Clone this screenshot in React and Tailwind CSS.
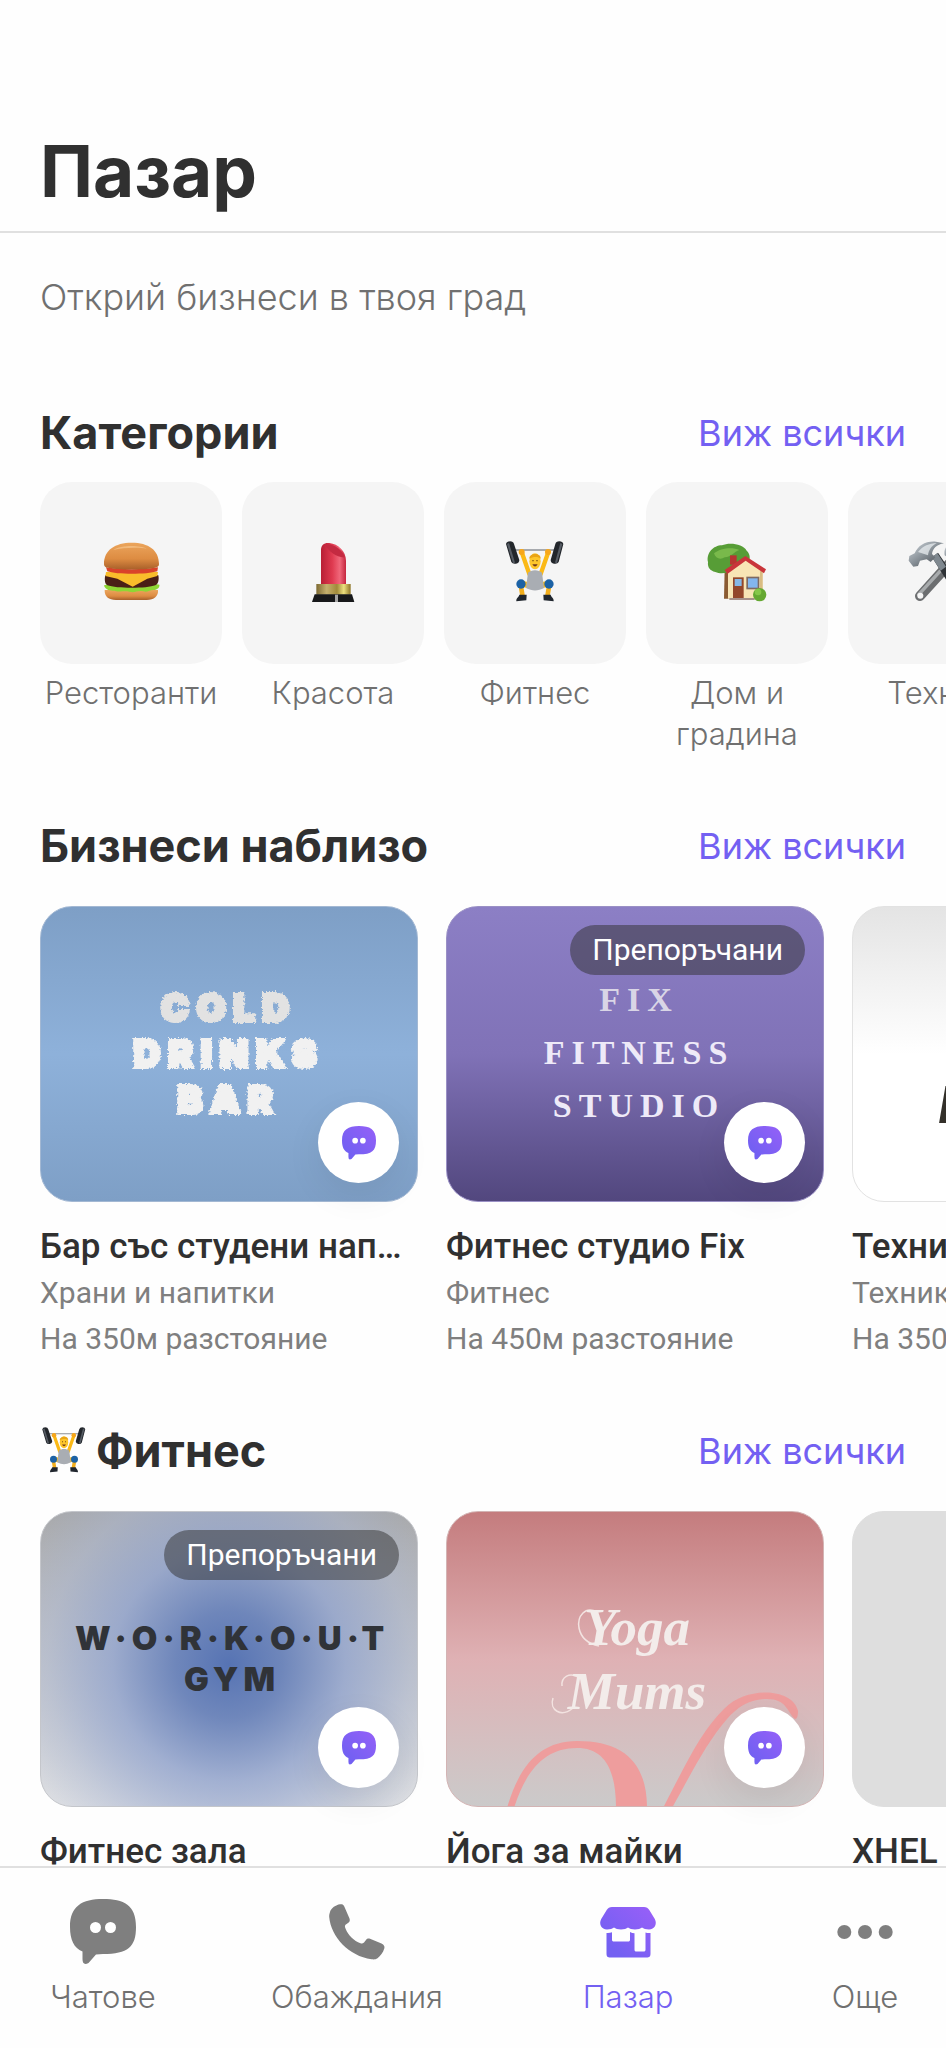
import React from "react";

function Burger({ className }) {
  return (
    <svg viewBox="297 213 192 192" className={className} aria-hidden="true">
      <defs>
        <linearGradient id="bun" x1="0" y1="0" x2="0" y2="1">
          <stop offset="0" stopColor="#eba55c" />
          <stop offset="0.6" stopColor="#dd8c42" />
          <stop offset="1" stopColor="#a9602a" />
        </linearGradient>
      </defs>
      <path d="M314 360 H474 C476 378 462 390 440 390 H348 C326 390 313 380 314 360Z" fill="url(#bun)" />
      <path d="M312 346 C320 340 468 340 478 344 C480 352 472 358 464 360 C450 358 444 368 430 364 C414 360 404 370 388 365 C370 362 360 368 344 362 C330 364 314 358 312 346Z" fill="#8fd634" />
      <path d="M316 316 C340 308 450 308 475 316 C478 330 474 344 466 346 C440 356 350 356 322 346 C314 342 313 328 316 316Z" fill="#4a1f16" />
      <path d="M318 306 H474 L472 318 L442 326 L398 350 L352 326 L316 318Z" fill="#f9bd2b" />
      <path d="M318 292 C360 300 430 300 474 292 L472 304 C440 314 350 314 322 304Z" fill="#d9432a" />
      <path d="M312 282 C312 240 345 218 395 218 C446 218 477 240 477 282 C477 290 470 293 462 294 C430 300 356 300 328 294 C319 293 312 291 312 282Z" fill="url(#bun)" />
      <path d="M340 240 C360 225 420 224 440 236 C420 232 370 232 340 240Z" fill="#f5c184" opacity="0.8" />
    </svg>
  );
}

function Lipstick({ className }) {
  return (
    <svg viewBox="903 213 192 192" className={className} aria-hidden="true">
      <defs>
        <linearGradient id="stick" x1="0" x2="1">
          <stop offset="0" stopColor="#b81f35" />
          <stop offset="0.45" stopColor="#df3a50" />
          <stop offset="0.75" stopColor="#f0677a" />
          <stop offset="1" stopColor="#c4253d" />
        </linearGradient>
        <linearGradient id="gold" x1="0" x2="1">
          <stop offset="0" stopColor="#7d6a33" />
          <stop offset="0.3" stopColor="#c5b06e" />
          <stop offset="0.6" stopColor="#a18a3a" />
          <stop offset="0.8" stopColor="#ece07e" />
          <stop offset="1" stopColor="#8d7426" />
        </linearGradient>
      </defs>
      <path d="M963 344 V240 C963 224 974 217 988 219 C1015 222 1038 244 1038 272 V344Z" fill="url(#stick)" />
      <path d="M974 223 C1000 220 1030 240 1034 262 C1012 264 984 244 974 223Z" fill="#c42a41" />
      <path d="M949 342 H1052 V374 H949Z" fill="url(#gold)" />
      <path d="M944 373 H1056 L1063 396 H936Z" fill="#17181a" />
      <path d="M1005 374 H1014 V396 H1005Z" fill="#a4a4a4" />
    </svg>
  );
}

function Lifter({ className }) {
  return (
    <svg viewBox="111 213 192 192" className={className} aria-hidden="true">
      <path d="M140 240 H275" stroke="#8d9096" strokeWidth="4" />
      <path d="M120 222 Q122 214 132 214 Q142 214 144 222 L160 270 Q160 279 150 281 Q140 283 136 276Z" fill="#22262b" />
      <path d="M123 222 L129 219 L147 278 L141 279Z" fill="#565c64" />
      <path d="M292 222 Q290 214 280 214 Q270 214 268 222 L254 270 Q254 279 264 281 Q274 283 278 276Z" fill="#22262b" />
      <path d="M289 222 L283 219 L267 278 L273 279Z" fill="#565c64" />
      <path d="M167 246 L190 312 M247 246 L224 312" stroke="#fbb916" strokeWidth="13" strokeLinecap="round" />
      <circle cx="167" cy="246" r="9" fill="#f7a71b" />
      <circle cx="246" cy="246" r="9" fill="#f7a71b" />
      <path d="M165 340 L188 346 M249 340 L226 346" stroke="#fbb916" strokeWidth="18" />
      <path d="M165 350 L170 380 M249 350 L244 380" stroke="#f2ae1c" strokeWidth="14" />
      <path d="M186 308 C196 298 218 298 228 308 L234 354 C216 364 198 364 180 354Z" fill="#a9adb3" />
      <ellipse cx="207" cy="274" rx="17" ry="24" fill="#fdc62b" />
      <path d="M190 266 C188 248 226 246 224 266 C216 258 200 260 190 266Z" fill="#e9a416" />
      <path d="M199 283 Q207 296 215 283Z" fill="#713a1b" />
      <circle cx="201" cy="272" r="2" fill="#50310f" />
      <circle cx="213" cy="272" r="2" fill="#50310f" />
      <circle cx="165" cy="342" r="14" fill="#1c62a5" />
      <circle cx="249" cy="342" r="14" fill="#1c62a5" />
      <path d="M160 374 H182 L181 391 L151 394 C150 384 158 382 160 374Z" fill="#20262e" />
      <path d="M254 374 H232 L233 391 L263 394 C264 384 256 382 254 374Z" fill="#20262e" />
    </svg>
  );
}

function House({ className }) {
  return (
    <svg viewBox="717 213 192 192" className={className} aria-hidden="true">
      <path d="M776 296 H790 V386 H774Z" fill="#8a5a31" />
      <path d="M726 276 C720 250 742 226 768 226 C790 216 832 222 842 242 C860 258 850 290 826 298 C800 304 770 316 748 306 C732 302 724 292 726 276Z" fill="#579d36" />
      <path d="M744 250 C762 234 800 230 820 240 C804 244 796 262 776 262 C764 270 748 266 744 250Z" fill="#79b94b" />
      <path d="M792 256 H812 V284 H792Z" fill="#b73532" />
      <path d="M786 304 L840 264 L890 300 V386 H786Z" fill="#f8e5b5" />
      <path d="M890 300 V386 H882 V304Z" fill="#d9bc83" />
      <path d="M776 300 L838 258 L900 298 L894 310 L839 272 L784 312Z" fill="#c9353a" />
      <path d="M801 322 H833 V386 H801Z" fill="#93472b" />
      <path d="M806 327 H827 V348 H806Z" fill="#86b8e6" />
      <path d="M841 320 H880 V358 H841Z" fill="#7e6a62" />
      <path d="M846 325 H875 V353 H846Z" fill="#83b6ee" />
      <path d="M790 384 H866 V390 H790Z" fill="#a6918a" />
      <circle cx="881" cy="374" r="20" fill="#65a832" />
      <circle cx="876" cy="366" r="10" fill="#85c748" />
    </svg>
  );
}

function Tools({ className }) {
  return (
    <svg viewBox="1323 213 192 192" className={className} aria-hidden="true">
      <defs>
        <linearGradient id="steel" x1="0" y1="0" x2="1" y2="1">
          <stop offset="0" stopColor="#d3dae0" />
          <stop offset="0.5" stopColor="#868e95" />
          <stop offset="1" stopColor="#3b4045" />
        </linearGradient>
      </defs>
      <path d="M1362 378 L1478 250" stroke="#6c6e70" strokeWidth="30" strokeLinecap="round" />
      <path d="M1358 374 L1440 284" stroke="#a8abad" strokeWidth="10" strokeLinecap="round" />
      <circle cx="1363" cy="377" r="9" fill="#f5f5f5" />
      <path d="M1436 256 C1432 234 1446 218 1470 216 L1462 240 L1482 252 L1500 236 C1504 262 1484 276 1462 272Z" fill="url(#steel)" />
      <path d="M1398 262 L1416 248 L1500 372 C1502 388 1486 396 1476 386Z" fill="#2f3337" />
      <path d="M1398 262 L1414 249 L1440 290 L1424 302Z" fill="#7f888f" />
      <path d="M1330 258 L1346 250 C1356 226 1380 212 1410 215 L1434 220 C1412 224 1400 236 1398 252 L1408 262 L1394 276 L1382 268 L1362 272 L1356 288 L1342 290 L1328 272Z" fill="url(#steel)" />
      <path d="M1356 246 C1370 228 1390 220 1412 219 C1396 228 1388 240 1386 256Z" fill="#eef2f5" opacity="0.7" />
    </svg>
  );
}

const bubble =
  "M33 0 C54 0 66 6 66 28 C66 48 58 55 33 55 L26 55.5 L18.500 64 Q12.500 67 12.500 60 L12.500 52.500 C4 49 0 41 0 28 C0 7 12 0 33 0Z";

function ChatIcon({ className, brand }) {
  return (
    <svg viewBox="0 0 66 66" className={className} aria-hidden="true">
      <defs>
        <linearGradient id="brand" x1="0" y1="1" x2="1" y2="0">
          <stop offset="0.2" stopColor="#7360f2" />
          <stop offset="1" stopColor="#9560f8" />
        </linearGradient>
      </defs>
      <path d={bubble} fill={brand ? "url(#brand)" : "#7f7f7f"} />
      <circle cx="25.500" cy="28.500" r="5.500" fill="#fff" />
      <circle cx="40.500" cy="28.500" r="5.500" fill="#fff" />
    </svg>
  );
}

function PhoneIcon({ className }) {
  return (
    <svg viewBox="-5 -5 66 66" className={className} aria-hidden="true">
      <path
        d="M1 8 C2 4 7 1 11 0.300 C13 0 14.500 0.500 15.300 2.500 L20.500 14.500 C21.300 16.500 20.500 18 19 19 L16.500 20.800 C15.500 22 16 23 16.500 24.500 C19 31 25 37 31.500 39.300 C33 39.800 34 39.500 35 38.500 L37 36 C38 34.500 39.500 34.200 41 34.700 L52.500 39.500 C55 40.500 56 42.500 55.300 44.500 C54 48.500 51.500 52 48.500 54.300 C46.500 55.600 45 55.600 42.500 55.300 C20 52 2 33 0.200 13 C0.100 11 0.500 9.500 1 8Z"
        fill="#7f7f7f"
      />
    </svg>
  );
}

function StoreIcon({ className }) {
  return (
    <svg viewBox="-5 -8 66 66" className={className} aria-hidden="true">
      <defs>
        <linearGradient id="store" x1="0" y1="1" x2="1" y2="0">
          <stop offset="0.200" stopColor="#7360f2" />
          <stop offset="1" stopColor="#9a5ff8" />
        </linearGradient>
      </defs>
      <path
        fillRule="evenodd"
        fill="url(#store)"
        d="M12 0 H44 C46.500 0 48 1 49.300 3 L54.800 12 C57.500 17 54.500 22.500 49 22.500 C46 22.500 43.500 21.800 42 20.600 C40.500 21.800 38 22.500 35 22.500 C32 22.500 29.500 21.800 28 20.600 C26.500 21.800 24 22.500 21 22.500 C18 22.500 15.500 21.800 14 20.600 C12.500 21.800 10 22.500 7 22.500 C1.500 22.500 -1.500 17 1.200 12 L6.700 3 C8 1 9.500 0 12 0Z M6.500 26 C8.500 26.200 10.500 26 12 25.300 V32.500 C12 34 12.500 34.500 14 34.500 H28 C29.500 34.500 30 34 30 32.500 V25 C31.500 25.800 33 26.200 34.500 26.200 V42.500 C34.500 44 35 44.500 36.500 44.500 H43.500 C45 44.500 45.500 44 45.500 42.500 V25.500 C47 26.100 48.800 26.200 50.500 26 V46.500 C50.500 49.500 49.500 50.500 46.500 50.500 H10.500 C7.500 50.500 6.500 49.500 6.500 46.500Z"
      />
    </svg>
  );
}

function MoreIcon({ className }) {
  return (
    <svg viewBox="0 0 66 66" className={className} aria-hidden="true">
      <circle cx="12.300" cy="33" r="7" fill="#7f7f7f" />
      <circle cx="33" cy="33" r="7" fill="#7f7f7f" />
      <circle cx="53.700" cy="33" r="7" fill="#7f7f7f" />
    </svg>
  );
}

function SectionHeader({ title, icon }) {
  return (
    <div className="flex items-center justify-between px-10">
      <h2 className="flex items-center gap-2 text-[45px] leading-[56px] font-bold text-[#303030]">
        {icon}
        {title}
      </h2>
      <a href="#all" className="text-[36px] leading-[44px] text-[#7360f2]">
        Виж всички
      </a>
    </div>
  );
}

function Category({ label, Icon }) {
  return (
    <li className="w-[182px] shrink-0">
      <a href="#category" className="flex flex-col items-center gap-2">
        <span className="flex h-[182px] w-full items-center justify-center rounded-[32px] bg-[#f5f5f5]">
          <Icon className="size-16" />
        </span>
        <span className="text-center text-[31px] leading-[41px] font-light text-[#707070]">{label}</span>
      </a>
    </li>
  );
}

function BusinessCard({ name, kind, distance, promoted, tone, children }) {
  return (
    <li className="w-[378px] shrink-0">
      <div className={`relative h-[296px] rounded-[32px] border ${tone}`}>
        <div className="flex size-full items-center justify-center overflow-hidden rounded-[31px]">{children}</div>
        {promoted && (
          <span className="absolute top-[18px] right-[18px] rounded-full bg-[#303030]/50 px-[22px] text-[30px] leading-[50px] text-white">
            Препоръчани
          </span>
        )}
        <button
          type="button"
          aria-label="Чат"
          className="absolute right-[18px] bottom-[18px] flex size-[81px] items-center justify-center rounded-full bg-white shadow-[0_12px_36px_rgba(0,0,0,0.07)]"
        >
          <ChatIcon brand className="size-[34px]" />
        </button>
      </div>
      <h3 className="mt-[23px] truncate text-[35px] leading-[44px] font-medium text-[#303030]">{name}</h3>
      <p className="mt-px truncate text-[30px] leading-[46px] text-[#7f7f7f]">{kind}</p>
      <p className="truncate text-[30px] leading-[46px] text-[#7f7f7f]">{distance}</p>
    </li>
  );
}

function ColdDrinksArt() {
  return (
    <p className="text-center font-['Inter'] text-[37px] leading-[46px] font-black tracking-[8px] text-[#f1f1f1] [-webkit-text-stroke:4px_#f1f1f1] [filter:url(#frost)]">
      <span className="text-[#e2e2e2] [-webkit-text-stroke:4px_#e2e2e2]">COLD</span>
      <br />
      DRINKS
      <br />
      BAR
    </p>
  );
}

function FixArt() {
  return (
    <p className="pb-1 pl-2 text-center font-['Liberation_Serif'] text-[34px] leading-[53px] font-bold tracking-[7px] text-[#eeeaf8]">
      <span className="text-[#d9d5e6]">FIX</span>
      <br />
      FITNESS
      <br />
      STUDIO
    </p>
  );
}

function WorkoutArt() {
  return (
    <p className="pl-1.5 text-center font-['Inter'] text-[33px] leading-[41px] font-black tracking-[5px] text-[#303338]">
      W·O·R·K·O·U·T
      <br />
      GYM
    </p>
  );
}

function YogaArt() {
  return (
    <div className="relative flex size-full items-center justify-center">
      <svg viewBox="0 0 376 294" className="absolute inset-0 size-full" aria-hidden="true">
        <path
          d="M60 296 C72 255 92 229 130 229 C176 229 200 250 200 296 H169 C169 255 156 236 130 236 C98 236 79 258 67 296Z"
          fill="#ee9d9d"
        />
        <path
          d="M216 296 C240 250 254 219 278 196 C300 174 346 176 351 199 C351 204 350 207 348 207 C340 200 340 187 320 187 C302 187 291 195 280 207 C260 230 245 260 225 296Z"
          fill="#ee9d9d"
        />
        <path
          d="M150 100 C138 94 130 104 132 116 C134 126 142 132 152 134 M134 167 C122 158 114 166 115 174 M126 196 C114 206 102 198 106 186"
          fill="none"
          stroke="#f3e3e1"
          strokeWidth="1.500"
        />
      </svg>
      <p className="relative pl-1 text-center font-['Liberation_Serif'] text-[53px] leading-[64px] font-bold text-[#f3ecea] italic">
        Yoga
        <br />
        Mums
      </p>
    </div>
  );
}

const categories = [
  { label: "Ресторанти", Icon: Burger },
  { label: "Красота", Icon: Lipstick },
  { label: "Фитнес", Icon: Lifter },
  { label: "Дом и градина", Icon: House },
  { label: "Техник", Icon: Tools },
];

export default function App() {
  return (
    <div className="flex h-screen flex-col overflow-hidden bg-[#fefefe] font-['Inter',sans-serif]">
      <svg className="absolute size-0" aria-hidden="true">
        <filter id="frost">
          <feTurbulence type="fractalNoise" baseFrequency="0.45" numOctaves="2" result="n" />
          <feDisplacementMap in="SourceGraphic" in2="n" scale="5" xChannelSelector="R" yChannelSelector="G" />
        </filter>
      </svg>
      <header className="shrink-0 border-b-2 border-[#e0e0e0] px-10 pt-[135px] pb-6">
        <h1 className="text-[71px] leading-[72px] font-bold text-[#303030]">Пазар</h1>
      </header>

      <main className="min-h-0 flex-1 overflow-hidden pt-[42px]">
        <p className="px-10 text-[36px] leading-[44px] font-light text-[#707070]">Открий бизнеси в твоя град</p>

        <section className="mt-[86px]">
          <SectionHeader title="Категории" />
          <ul className="mt-[21px] flex gap-5 overflow-hidden pl-10">
            {categories.map((c) => (
              <Category key={c.label} {...c} />
            ))}
          </ul>
        </section>

        <section className="mt-16">
          <SectionHeader title="Бизнеси наблизо" />
          <ul className="mt-8 flex gap-7 overflow-hidden pl-10 font-['Roboto',sans-serif]">
            <BusinessCard
              name="Бар със студени напитки"
              kind="Храни и напитки"
              distance="На 350м разстояние"
              tone="border-[#a3b8d3] bg-linear-to-b from-[#7e9fc6] via-[#8eb1da] to-[#7e9fc6]"
            >
              <ColdDrinksArt />
            </BusinessCard>
            <BusinessCard
              name="Фитнес студио Fix"
              kind="Фитнес"
              distance="На 450м разстояние"
              promoted
              tone="border-[#9a90c5] bg-linear-to-b from-[#8c7fc5] via-[#8072b7] to-[#52477e]"
            >
              <FixArt />
            </BusinessCard>
            <BusinessCard
              name="Техника"
              kind="Техника"
              distance="На 350м разстояние"
              tone="border-[#e2e2e2] bg-linear-to-b from-[#e4e4e4] via-white to-white"
            >
              <span className="w-full pt-[104px] pl-[86px] text-[52px] font-black text-[#33302a] italic">M</span>
            </BusinessCard>
          </ul>
        </section>

        <section className="mt-[61px]">
          <SectionHeader title="Фитнес" icon={<Lifter className="size-12" />} />
          <ul className="mt-8 flex gap-7 overflow-hidden pl-10 font-['Roboto',sans-serif]">
            <BusinessCard
              name="Фитнес зала"
              kind="Фитнес"
              distance="На 350м разстояние"
              promoted
              tone="border-[#c4c6cb] bg-[radial-gradient(circle_at_50%_52%,#5673b3_0%,rgba(106,131,186,0.95)_22%,rgba(146,164,206,0.8)_48%,rgba(170,182,210,0.5)_75%,rgba(190,195,205,0)_100%),linear-gradient(to_bottom,#a8a8a8,#e6e6e6)]"
            >
              <WorkoutArt />
            </BusinessCard>
            <BusinessCard
              name="Йога за майки"
              kind="Фитнес"
              distance="На 450м разстояние"
              tone="border-[#d3b4b4] bg-linear-to-b from-[#c47c7e] via-[#dfb1b4] to-[#cbcaca]"
            >
              <YogaArt />
            </BusinessCard>
            <BusinessCard
              name="XHEL"
              kind="Фитнес"
              distance="На 500м разстояние"
              tone="border-[#dedede] bg-[#dedede]"
            />
          </ul>
        </section>
      </main>

      <nav className="grid h-[182px] shrink-0 grid-cols-[158fr_182fr_192fr_114fr] gap-x-[84px] border-t-2 border-[#e0e0e0] bg-[#fefefe] px-6 pt-[31px] text-[31px] leading-[40px] font-light text-[#707070]">
        <a href="#chats" className="flex flex-col items-center gap-3">
          <ChatIcon className="size-[66px]" />
          Чатове
        </a>
        <a href="#calls" className="flex flex-col items-center gap-3">
          <PhoneIcon className="size-[66px]" />
          Обаждания
        </a>
        <a href="#market" aria-current="page" className="flex flex-col items-center gap-3 text-[#7360f2]">
          <StoreIcon className="size-[66px]" />
          Пазар
        </a>
        <a href="#more" className="flex flex-col items-center gap-3">
          <MoreIcon className="size-[66px]" />
          Още
        </a>
      </nav>
    </div>
  );
}
